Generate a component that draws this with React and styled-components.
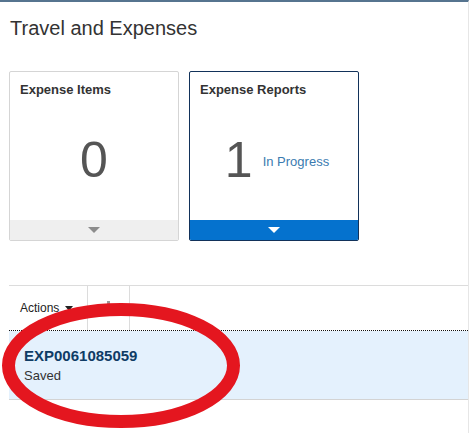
import styled, { createGlobalStyle } from 'styled-components';

const Global = createGlobalStyle`
  html, body {
    margin: 0;
    padding: 0;
    background: #fff;
  }
  body {
    font-family: "Liberation Sans", Arial, sans-serif;
    color: #333;
  }
`

const Page = styled.div`
  position: relative;
  box-sizing: border-box;
  width: 469px;
  height: 433px;
  overflow: hidden;
  border-top: 2px solid #56748f;
  border-right: 1px solid #e6e6e6;
  padding-left: 9px;
`

const Title = styled.h1`
  margin: 14px 0 0 1px;
  font-size: 20px;
  line-height: 24px;
  font-weight: normal;
  color: #333;
`

const Tiles = styled.div`
  display: flex;
  gap: 10px;
  margin-top: 31px;
`

const Tile = styled.div`
  box-sizing: border-box;
  width: 170px;
  height: 170px;
  display: flex;
  flex-direction: column;
  border: 1px solid ${(props) => (props.active ? '#12325a' : '#d5d5d5')};
  border-radius: 2px;
  background: #fff;
  overflow: hidden;
`

const TileHeader = styled.div`
  padding: 10px 10px 0 10px;
  font-size: 13px;
  line-height: 16px;
  font-weight: bold;
  color: #333;
`

const TileBody = styled.div`
  flex: 1;
  display: flex;
  align-items: center;
  justify-content: center;
  gap: 10px;
  padding: 2px 0 0 ${(props) => (props.active ? 6 : 0)}px;
`

const Count = styled.span`
  font-size: 50px;
  line-height: 1;
  color: #555;
`

const Status = styled.span`
  font-size: 13px;
  color: #3b7bb0;
  margin-top: 2px;
`

const TileFooter = styled.div`
  height: 20px;
  display: flex;
  align-items: center;
  justify-content: center;
  background: ${(props) => (props.active ? '#0572ce' : '#efefef')};
`

const Caret = styled.span`
  width: 0;
  height: 0;
  border-left: 6px solid transparent;
  border-right: 6px solid transparent;
  border-top: 6px solid ${(props) => (props.active ? '#fff' : '#8c8c8c')};
`

const Toolbar = styled.div`
  display: flex;
  height: 44px;
  margin-top: 44px;
  border-top: 1px solid #dcdcdc;
  border-bottom: 1px dotted #111;
`

const ToolButton = styled.div`
  display: flex;
  align-items: center;
  gap: 6px;
  padding: 0 ${(props) => props.pad || 14}px 0 ${(props) => props.pad || 11}px;
  border-right: 1px solid #dcdcdc;
  font-size: 12px;
  color: #222;
`

const SmallCaret = styled.span`
  width: 0;
  height: 0;
  border-left: 4px solid transparent;
  border-right: 4px solid transparent;
  border-top: 5px solid #222;
  margin-top: 1px;
`

const DisabledIcon = styled.span`
  display: block;
  width: 3px;
  height: 13px;
  background: #9a9a9a;
  margin-top: -2px;
`

const ReportRow = styled.div`
  box-sizing: border-box;
  height: 69px;
  padding: 16px 0 0 15px;
  background: #e4f1fd;
  border-bottom: 1px solid #d3d3d3;
`

const ReportId = styled.div`
  font-size: 15px;
  line-height: 18px;
  font-weight: bold;
  color: #0f3c65;
`

const ReportState = styled.div`
  margin-top: 3px;
  font-size: 13px;
  line-height: 16px;
  color: #333;
`

const Annotation = styled.svg`
  position: absolute;
  left: 0;
  top: -2px;
  pointer-events: none;
`

export default function App() {
  return (
    <>
      <Global />
      <Page>
        <Title>Travel and Expenses</Title>
        <Tiles>
          <Tile>
            <TileHeader>Expense Items</TileHeader>
            <TileBody>
              <Count>0</Count>
            </TileBody>
            <TileFooter>
              <Caret />
            </TileFooter>
          </Tile>
          <Tile active>
            <TileHeader>Expense Reports</TileHeader>
            <TileBody active>
              <Count>1</Count>
              <Status>In Progress</Status>
            </TileBody>
            <TileFooter active>
              <Caret active />
            </TileFooter>
          </Tile>
        </Tiles>
        <Toolbar>
          <ToolButton>
            Actions <SmallCaret />
          </ToolButton>
          <ToolButton pad={19}>
            <DisabledIcon />
          </ToolButton>
        </Toolbar>
        <ReportRow>
          <ReportId>EXP0061085059</ReportId>
          <ReportState>Saved</ReportState>
        </ReportRow>
        <Annotation width="469" height="435">
          <ellipse cx="121" cy="365.5" rx="112.5" ry="56" fill="none" stroke="#e4161f" strokeWidth="13" />
        </Annotation>
      </Page>
    </>
  )
}
